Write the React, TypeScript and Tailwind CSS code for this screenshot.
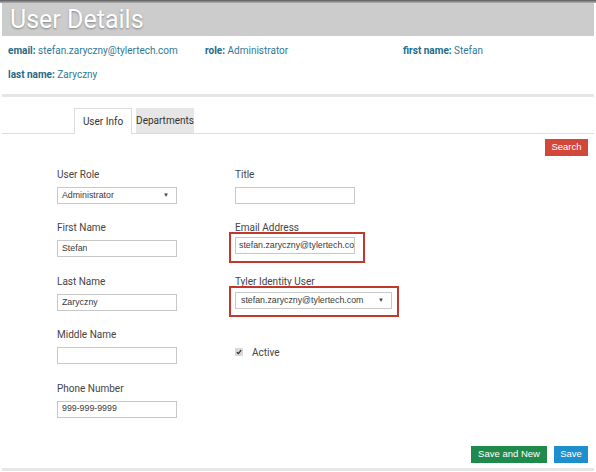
import React from 'react';

const roboto = { fontFamily: 'Roboto, "Liberation Sans", sans-serif' };

function Field({ label, value, width = 'w-[120px]', select = false }: { label: string; value?: string; width?: string; select?: boolean }) {
  return (
    <div className="flex flex-col">
      <label className="text-[10px] leading-[14px] text-[#444]">{label}</label>
      <div
        className={`mt-[5px] h-[17px] ${width} border border-[#c8c8c8] bg-white flex items-center justify-between px-[4px] text-[8.8px] text-[#3a3a3a] font-['Liberation_Sans',Arial,sans-serif]`}
      >
        <span className="truncate">{value}</span>
        {select && <span className="text-[6px] text-[#444] mr-[3px]">▼</span>}
      </div>
    </div>
  );
}

export default function App() {
  return (
    <div className="relative w-[596px] h-[472px] overflow-hidden bg-white" style={roboto}>
      <div className="h-[3px] bg-gradient-to-b from-[#5a5a5a] to-[#b5b5b5]" />
      <div className="mx-[2px] h-[33px] bg-[#cccccc] flex items-center pl-[8px]">
        <h1 className="text-[25px] leading-none text-white [text-shadow:0_1px_2px_rgba(0,0,0,0.35)]">User Details</h1>
      </div>

      {/* summary */}
      <div className="px-[8px] pt-[8px] h-[58px] text-[10px] leading-[13px]">
        <div className="grid grid-cols-[197px_198px_1fr]">
          <p><b className="text-[#236b86]">email:</b> <span className="text-[#2f7896]">stefan.zaryczny@tylertech.com</span></p>
          <p><b className="text-[#236b86]">role:</b> <span className="text-[#2f7896]">Administrator</span></p>
          <p><b className="text-[#236b86]">first name:</b> <span className="text-[#2f7896]">Stefan</span></p>
        </div>
        <p className="mt-[11px]"><b className="text-[#236b86]">last name:</b> <span className="text-[#2f7896]">Zaryczny</span></p>
      </div>
      <div className="mx-[2px] h-[3px] bg-[#e6e6e6]" />

      {/* tabs */}
      <div className="mx-[2px] mt-[11px] flex items-end border-b border-[#dddddd] pl-[72px] h-[26px]">
        <div className="h-[26px] w-[58px] -mb-px border border-b-0 border-[#dddddd] bg-white flex items-center justify-center text-[10px] text-[#333]">User Info</div>
        <div className="ml-[4px] h-[25px] w-[58px] bg-[#e6e6e6] flex items-center justify-center text-[10px] text-[#333]">Departments</div>
      </div>

      <div className="flex justify-end pr-[8px] pt-[5px]">
        <button className="h-[17px] w-[43px] bg-[#d2473a] text-white text-[9.5px] font-['Liberation_Sans',Arial,sans-serif]">Search</button>
      </div>

      {/* form */}
      <div className="pl-[57px] pt-[12px] grid grid-cols-[178px_1fr] gap-y-[17.4px]">
        <Field label="User Role" value="Administrator" select />
        <Field label="Title" />

        <Field label="First Name" value="Stefan" />
        <div className="flex flex-col">
          <label className="text-[10px] leading-[14px] text-[#444]">Email Address</label>
          <div className="relative mt-[2px] w-[120px]">
            <div className="h-[17px] w-[120px] border border-[#c8c8c8] px-[3px] flex items-center text-[8.8px] text-[#3a3a3a] overflow-hidden whitespace-nowrap font-['Liberation_Sans',Arial,sans-serif]">
              stefan.zaryczny@tylertech.co
            </div>
            <span className="absolute -left-[6px] -top-[5px] -right-[10px] -bottom-[9px] border-2 border-[#c0392b]" />
          </div>
        </div>

        <Field label="Last Name" value="Zaryczny" />
        <div className="flex flex-col">
          <label className="text-[10px] leading-[14px] text-[#444]">Tyler Identity User</label>
          <div className="relative mt-[3px] w-[157px]">
            <div className="h-[17px] w-[157px] border border-[#c8c8c8] pl-[5px] pr-[7px] flex items-center justify-between text-[8.8px] text-[#3a3a3a] font-['Liberation_Sans',Arial,sans-serif]">
              <span>stefan.zaryczny@tylertech.com</span>
              <span className="text-[6px] text-[#444]">▼</span>
            </div>
            <span className="absolute -left-[6px] -top-[6px] -right-[7px] -bottom-[8px] border-2 border-[#c0392b]" />
          </div>
        </div>

        <Field label="Middle Name" />
        <div className="flex items-center pt-[12px] self-center">
          <span className="h-[8px] w-[8px] rounded-[1px] bg-[#d8d8d8] flex items-center justify-center">
            <svg width="6" height="6" viewBox="0 0 6 6"><path d="M0.8 3.2 L2.4 4.6 L5.2 1.2" stroke="#333" strokeWidth="1.3" fill="none" /></svg>
          </span>
          <span className="ml-[9px] text-[10px] text-[#444]">Active</span>
        </div>

        <Field label="Phone Number" value="999-999-9999" />
        <div />
      </div>

      <div className="absolute left-0 right-0 bottom-[9px] flex justify-end gap-[7px] pr-[8px]">
        <button className="h-[17px] w-[76px] bg-[#1f8a4c] text-white text-[9.5px] font-['Liberation_Sans',Arial,sans-serif]">Save and New</button>
        <button className="h-[17px] w-[34px] bg-[#1d8fcc] text-white text-[9.5px] font-['Liberation_Sans',Arial,sans-serif]">Save</button>
      </div>
      <div className="absolute left-[2px] right-[2px] bottom-[1px] h-[3px] bg-[#e6e6e6]" />
    </div>
  );
}
